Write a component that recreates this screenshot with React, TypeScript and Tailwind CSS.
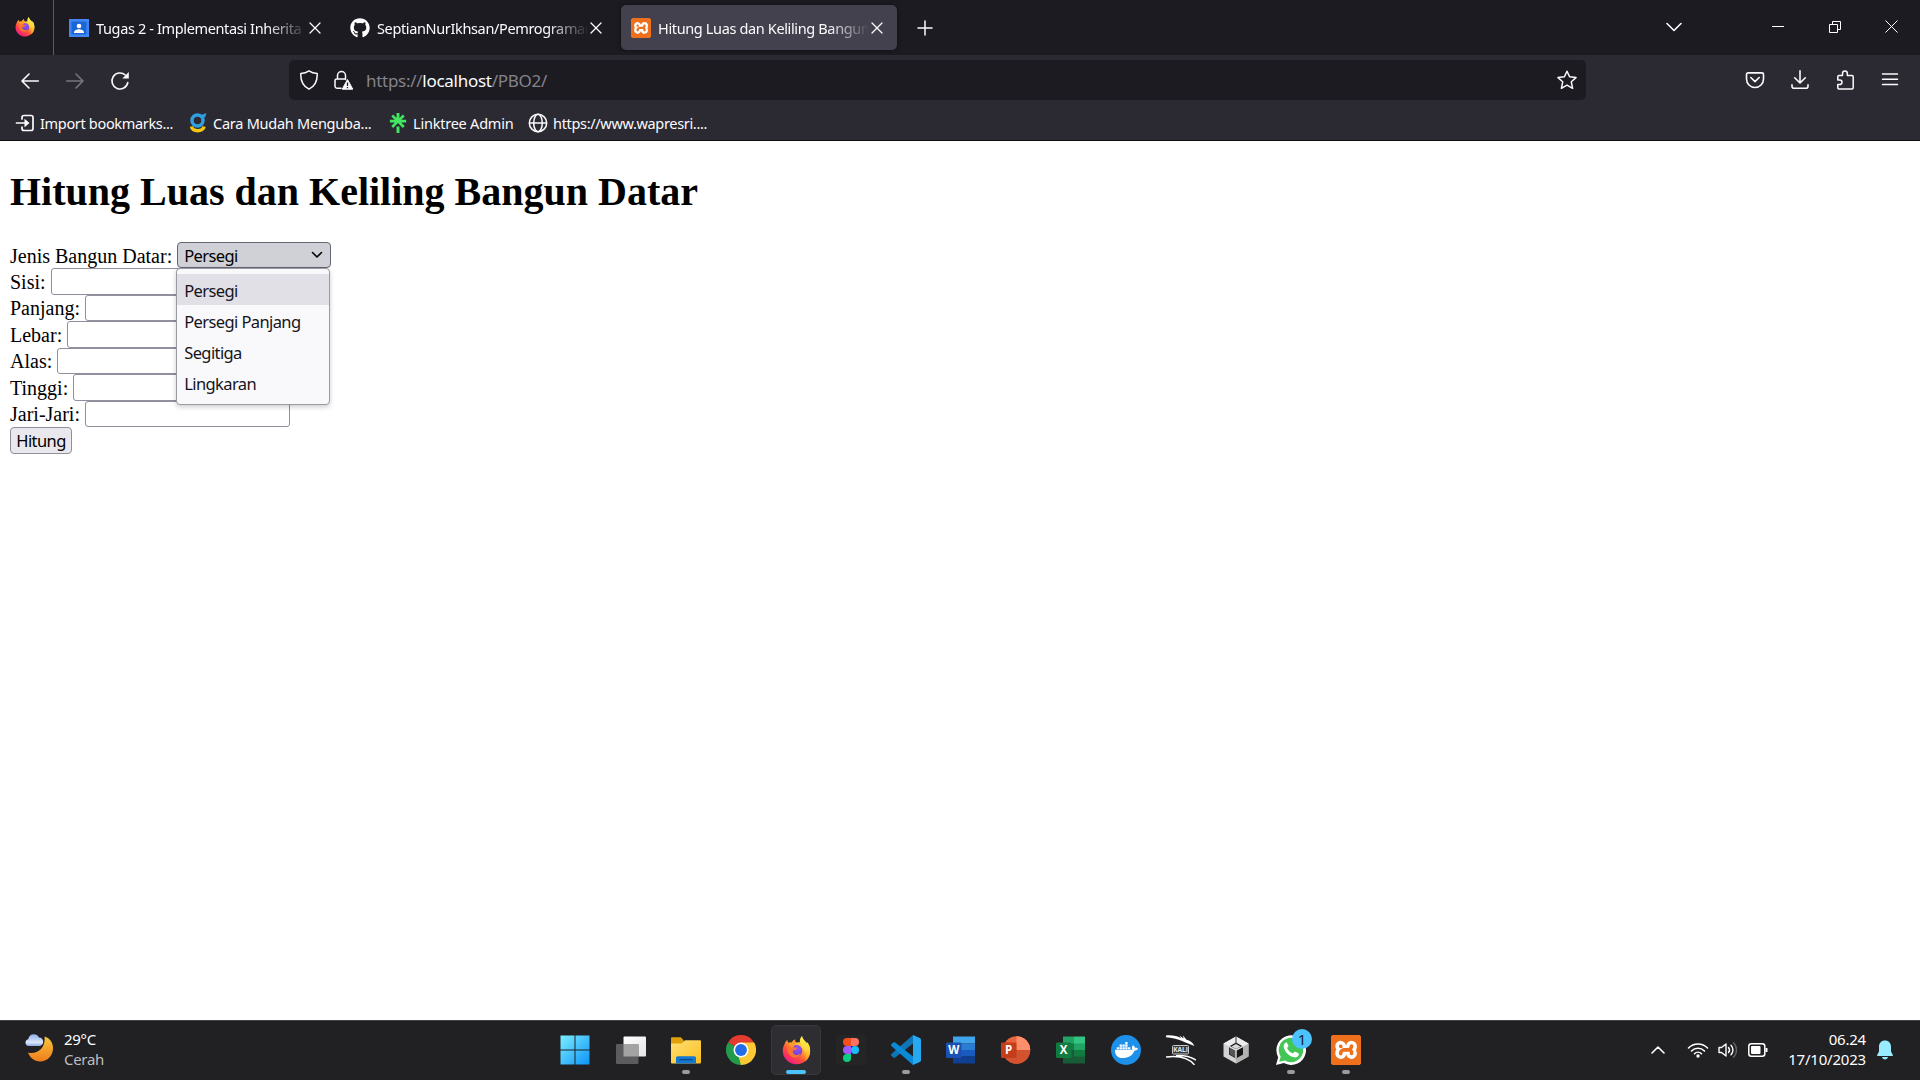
import type { ReactNode } from "react";
import { FaGithub, FaDocker } from "react-icons/fa";
import { SiXampp, SiLinktree } from "react-icons/si";

const LINE = { fill: "none", stroke: "currentColor", strokeLinecap: "round", strokeLinejoin: "round" } as const;

function Firefox({ className, id }: { className: string; id: string }) {
  return (
    <svg viewBox="0 0 30 30" className={className}>
      <defs>
        <linearGradient id={id + "b"} x1="0.8" y1="0.1" x2="0.2" y2="0.95">
          <stop offset="0" stopColor="#fff14a" />
          <stop offset="0.35" stopColor="#ffb02a" />
          <stop offset="0.65" stopColor="#ff4f3c" />
          <stop offset="1" stopColor="#f0168a" />
        </linearGradient>
        <linearGradient id={id + "y"} x1="0.6" y1="0" x2="0.5" y2="1">
          <stop offset="0" stopColor="#fff44f" />
          <stop offset="0.5" stopColor="#ffd83a" />
          <stop offset="1" stopColor="#ff8a1f" />
        </linearGradient>
        <radialGradient id={id + "p"} cx="0.6" cy="0.3" r="0.8">
          <stop offset="0" stopColor="#9a52ff" />
          <stop offset="1" stopColor="#5a3bc4" />
        </radialGradient>
      </defs>
      <path d="M2.6 8.5C3.2 6.6 4.2 5.2 5.6 4.2c0 1.300.5 2.300 1.400 3 1-.4 2.100-.5 3.200-.3C10.800 5.300 12 4.100 13.600 3.500c-.3 1.200 0 2.300.9 3.300l4-.3C18.200 4.300 18.900 2 20.700 0c.4 2.500 1.600 4 3.400 5.700.8.700 1.300 1.500 1.700 2.300l.4-1.500c1.800 2.600 2.900 5.600 2.900 8.900C29.100 23 22.800 29.200 15 29.200S.8 23 .8 15.200c0-2.500.6-4.800 1.800-6.700z" fill={`url(#${id}b)`} />
      <path d="M20.700 0c.4 2.500 1.600 4 3.400 5.700.8.700 1.300 1.500 1.700 2.300l.4-1.500c1.800 2.600 2.900 5.600 2.900 8.900 0 4.500-2 8.500-5.300 11 1.600-3.500 1.500-8.500-1-11.600C20.500 11.800 17.200 5 20.700 0z" fill={`url(#${id}y)`} />
      <circle cx="15" cy="15.300" r="6" fill={`url(#${id}p)`} />
      <path d="M5.500 12.500c2-2 4.500-2 6.500-.8 1.600-.2 2.600.2 3.700.9-1 1.700-2.700 2-4.200 2.500-.8 1.800.5 4.200 3 4.500 2 .2 3.500-.6 5-1.900-.6 3-3.300 4.800-6.300 4.600-4.500-.3-7.700-4.600-7.700-9.800z" fill="#ff7a2b" opacity="0.9" />
      <path d="M7 7.200c1-.4 2.100-.5 3.200-.3.600-1.600 1.800-2.800 3.400-3.400-.3 1.200 0 2.300.9 3.300-.8 2-2.500 3-2.500 4.900-3 .2-5-1.500-5-4.500z" fill="#ff9a2a" />
    </svg>
  );
}

function Xampp({ className }: { className: string }) {
  return (
    <div className={"overflow-hidden rounded-[2px] border border-[#ee6f1c] bg-white " + className}>
      <SiXampp className="h-full w-full scale-[1.06] bg-[linear-gradient(#ee6f1c,#ee6f1c_10%,white_10%,white_90%,#ee6f1c_90%)] text-[#ee6f1c]" />
    </div>
  );
}

function Close() {
  return (
    <svg viewBox="0 0 12 12" className="h-3 w-3 shrink-0 text-[#fbfbfe]">
      <path d="M1 1l10 10M11 1L1 11" {...LINE} strokeWidth="1.300" />
    </svg>
  );
}

function Tab({ icon, title, active }: { icon: ReactNode; title: string; active?: boolean }) {
  return (
    <div className={"flex h-[45px] w-[276px] shrink-0 items-center rounded-[5px] pl-[10px] " + (active ? "bg-[#42414d] shadow-[0_0_4px_rgba(0,0,0,0.5)]" : "")}>
      <div className="flex w-[20px] shrink-0 justify-center">{icon}</div>
      <div className="ml-[7px] w-[210px] overflow-hidden whitespace-nowrap text-[14.500px] leading-[20px] tracking-[-0.360px] text-[#fbfbfe] [mask-image:linear-gradient(to_right,black_170px,transparent_212px)]">
        {title}
      </div>
      <div className="ml-[3px]"><Close /></div>
    </div>
  );
}

function TitleBar() {
  return (
    <div className="flex h-[55px] items-center bg-[#1c1b22]">
      <div className="flex h-full w-[54px] items-center border-r border-[#5b5b62] pb-[2px] pl-[15px]">
        <Firefox id="fs" className="h-5 w-5" />
      </div>
      <div className="ml-[5px] flex gap-[5px]">
        <Tab
          title="Tugas 2 - Implementasi Inherita"
          icon={
            <svg viewBox="0 0 20 18" className="h-[18px] w-5">
              <path d="M0 0h20v18H0z" fill="#4285f4" /><path d="M2.500 2.500h15v13h-15z" fill="#1a66d6" />
              <circle cx="10" cy="7" r="2.300" fill="#fff" /><path d="M5 14c0-3 3-3.700 5-3.700s5 .7 5 3.700z" fill="#fff" />
            </svg>
          }
        />
        <Tab title="SeptianNurIkhsan/Pemrograman" icon={<FaGithub className="h-5 w-5 text-white" />} />
        <Tab active title="Hitung Luas dan Keliling Bangun" icon={<Xampp className="h-5 w-5" />} />
      </div>
      <svg viewBox="0 0 16 16" className="ml-[20px] h-4 w-4 text-[#fbfbfe]"><path d="M8 1v14M1 8h14" {...LINE} strokeWidth="1.500" /></svg>
      <div className="ml-auto flex items-center pb-[2px] text-[#fbfbfe]">
        <svg viewBox="0 0 16 10" className="mr-[90px] h-[10px] w-4"><path d="M1 1.500l7 7 7-7" {...LINE} strokeWidth="1.600" /></svg>
        <div className="mr-[45px] h-px w-3 bg-white" />
        <svg viewBox="0 0 12 12" className="mr-[44px] h-3 w-3"><path d="M.5 3.500h8v8h-8zM3.500 3.500v-3h8v8h-3" fill="none" stroke="#fff" /></svg>
        <svg viewBox="0 0 13 13" className="mr-[22px] h-[13px] w-[13px]"><path d="M.5.5l12 12M12.500.5l-12 12" fill="none" stroke="#fff" /></svg>
      </div>
    </div>
  );
}

function NavBar() {
  return (
    <div className="flex h-[50px] items-center bg-[#2b2a33] text-[#fbfbfe]">
      <svg viewBox="0 0 20 20" className="ml-5 mt-px h-5 w-5"><path d="M18.300 10H2M9 3l-7 7 7 7" {...LINE} strokeWidth="1.600" /></svg>
      <svg viewBox="0 0 20 20" className="ml-[25px] mt-px h-5 w-5 text-[#77767e]"><path d="M1.700 10H18M11 3l7 7-7 7" {...LINE} strokeWidth="1.600" /></svg>
      <svg viewBox="0 0 20 20" className="ml-[25px] mt-px h-5 w-5">
        <path d="M17.800 11.500A8 8 0 1 1 15.300 4" {...LINE} strokeWidth="1.600" /><path d="M18.800 1v6.500h-6.500z" fill="currentColor" />
      </svg>
      <div className="ml-[159px] flex h-10 w-[1297px] items-center rounded-[5px] bg-[#1c1b22]">
        <svg viewBox="0 0 20 20" className="ml-[10px] h-5 w-5"><path d="M10 .9c2.200 1.600 5 2.500 8.200 2.600.3 6.500-1.700 12.500-8.200 15.700C3.500 16 1.500 10 1.800 3.500 5 3.400 7.800 2.500 10 .9z" {...LINE} strokeWidth="1.500" /></svg>
        <svg viewBox="0 0 20 20" className="ml-[14px] h-5 w-5">
          <path d="M8 18.200H4A2 2 0 0 1 2 16.500v-5.800a1.800 1.800 0 0 1 2-1.800h8.500M4.500 8.500V5.500a4 4 0 0 1 8 0v4" {...LINE} strokeWidth="1.500" />
          <path d="M14.500 9.500l5.300 9.700H9.200z" fill="currentColor" stroke="currentColor" strokeLinejoin="round" />
          <path d="M14.500 12.500v3.500M14.500 17v1.300" stroke="#1c1b22" strokeWidth="1.300" />
        </svg>
        <div className="ml-[13px] mt-[2px] text-[17px] leading-6 tracking-[-0.280px] text-[#84838a]">
          https://<span className="text-[#fbfbfe]">localhost</span>/PBO2/
        </div>
        <svg viewBox="0 0 20 20" className="ml-auto mr-[9px] h-5 w-5"><path d="M10 1.200l2.600 5.600 6.400.8-4.700 4.200 1.300 6.500-5.600-3.200-5.600 3.200 1.300-6.500L1 7.600l6.400-.8z" {...LINE} strokeWidth="1.500" /></svg>
      </div>
      <div className="ml-auto mr-5 flex items-center gap-[25px]">
        <svg viewBox="0 0 20 20" className="h-5 w-5"><path d="M3 2.900h14a1.500 1.500 0 0 1 1.500 1.500V9A8.500 8.500 0 0 1 1.500 9V4.400A1.500 1.500 0 0 1 3 2.900zM5.800 7.500L10 11.600l4.200-4.100" {...LINE} strokeWidth="1.600" /></svg>
        <svg viewBox="0 0 20 20" className="h-5 w-5"><path d="M10 .8v12M4.700 7.800L10 13l5.300-5.200M2 14.700v1.500a2 2 0 0 0 2 2h12a2 2 0 0 0 2-2v-1.500" {...LINE} strokeWidth="1.600" /></svg>
        <svg viewBox="0 0 20 20" className="h-5 w-5"><path d="M7.500 5.500V3.400a2.400 2.400 0 0 1 4.800 0v2.100H17a1.200 1.200 0 0 1 1.200 1.200v11a1.200 1.200 0 0 1-1.200 1.200H4a1.200 1.200 0 0 1-1.200-1.200v-3.200h2a2.200 2.200 0 0 0 0-4.400h-2V6.700A1.200 1.200 0 0 1 4 5.500z" {...LINE} strokeWidth="1.500" /></svg>
        <svg viewBox="0 0 20 20" className="h-5 w-5"><path d="M2.500 4h15M2.500 9.300h15M2.500 14.600h15" {...LINE} strokeWidth="1.500" /></svg>
      </div>
    </div>
  );
}

function Bookmark({ icon, children, className }: { icon: ReactNode; children: ReactNode; className: string }) {
  return (
    <div className={"flex shrink-0 items-center whitespace-nowrap " + className}>
      <div className="mr-[5px] flex w-5 shrink-0 justify-center">{icon}</div>
      {children}
    </div>
  );
}

function BookmarksBar() {
  return (
    <div className="flex h-[36px] items-center border-b border-[#0c0c0d] bg-[#2b2a33] pl-[15px] pt-[1px] text-[14.500px] leading-5 text-[#fbfbfe]">
      <Bookmark className="w-[173px] tracking-[-0.330px]" icon={<svg viewBox="0 0 20 20" className="h-5 w-5"><path d="M7 6V4.500A2 2 0 0 1 9 2.500h7a2 2 0 0 1 2 2v11a2 2 0 0 1-2 2H9a2 2 0 0 1-2-2V14M1.500 10H12" {...LINE} strokeWidth="1.700" /><path d="M9.500 5.800l5 4.200-5 4.200z" fill="currentColor" /></svg>}>
        Import bookmarks...
      </Bookmark>
      <Bookmark className="w-[200px] tracking-[-0.250px]" icon={<svg viewBox="0 0 20 20" className="h-5 w-5"><path d="M3.500 13.500c1 5.500 12 5.500 12.500 0" fill="none" stroke="#f5c518" strokeWidth="3.500" /><circle cx="9.500" cy="7.500" r="5.500" fill="none" stroke="#2f9fe0" strokeWidth="3.500" /><path d="M12 2.500L18.500 0 17 4.500z" fill="#2f9fe0" /></svg>}>
        Cara Mudah Menguba...
      </Bookmark>
      <Bookmark className="w-[140px] tracking-[-0.220px]" icon={<SiLinktree className="h-5 w-5 text-[#43e660]" />}>
        Linktree Admin
      </Bookmark>
      <Bookmark className="tracking-[-0.330px]" icon={<svg viewBox="0 0 20 20" className="h-5 w-5"><g fill="none" stroke="currentColor" strokeWidth="1.500"><circle cx="10" cy="10" r="8.700" /><ellipse cx="10" cy="10" rx="4.300" ry="8.700" /><path d="M1.500 10h17" /></g></svg>}>
        https://www.wapresri....
      </Bookmark>
    </div>
  );
}

const FIELDS = ["Sisi:", "Panjang:", "Lebar:", "Alas:", "Tinggi:", "Jari-Jari:"];
const OPTIONS = ["Persegi", "Persegi Panjang", "Segitiga", "Lingkaran"];

function Page() {
  return (
    <main className="flex-1 bg-white pl-[10px] pt-[28px] font-['Liberation_Serif',serif] text-[20px] text-black">
      <h1 className="h-[46px] text-[40px] font-bold leading-[46px]">Hitung Luas dan Keliling Bangun Datar</h1>
      <div className="mt-[27px] flex h-[26px] items-center">
        <span className="pt-px leading-[26px]">Jenis Bangun Datar:</span>
        <div className="relative ml-[5px] h-[26px] w-[154px] font-['Noto_Sans',sans-serif] text-[16.500px] tracking-[-0.600px]">
          <div className="flex h-full items-center justify-between rounded-[4px] border border-[#676774] bg-[#d0d0d7] pl-[6px] pr-[7px] leading-6">
            <span className="pt-px">Persegi</span>
            <svg viewBox="0 0 12 8" className="h-2 w-3"><path d="M1.500 1.500L6 6l4.500-4.500" {...LINE} strokeWidth="1.600" /></svg>
          </div>
          <ul className="absolute -left-px top-[26px] z-10 h-[137px] w-[154px] rounded-[4px] border border-[#9a9aa3] bg-[#f9f9fb] pt-[5px] text-[#15141a] shadow-[0_2px_5px_rgba(0,0,0,0.2)]">
            {OPTIONS.map((o, i) => (
              <li key={o} className={"h-[31px] whitespace-nowrap pl-[7px] pt-px leading-[31px] " + (i === 0 ? "bg-[#e0e0e6]" : "")}>{o}</li>
            ))}
          </ul>
        </div>
      </div>
      {FIELDS.map((label) => (
        <div key={label} className="flex h-[26.500px] items-center">
          <span className="pt-px leading-[26px]">{label}</span>
          <span className="ml-[5px] h-[26.500px] w-[205px] rounded-[3px] border border-[#8f8f9d] bg-white" />
        </div>
      ))}
      <button className="flex h-[27px] w-[62px] items-center justify-center rounded-[4px] border border-[#8f8f9d] bg-[#e9e9ed] font-['Noto_Sans',sans-serif] text-[16.500px] leading-6 tracking-[-0.600px]">
        Hitung
      </button>
    </main>
  );
}

function Office({ letter, children, chip }: { letter: string; children: ReactNode; chip: string }) {
  return (
    <svg viewBox="0 0 30 30" className="h-[30px] w-[30px]">
      {children}
      <rect x="0" y="7.500" width="15.500" height="15.500" rx="1.300" fill={chip} />
      <text x="7.700" y="19.300" textAnchor="middle" fontSize="11.500" fontWeight="700" fontFamily="Open Sans, sans-serif" fill="#fff">{letter}</text>
    </svg>
  );
}

function App30({ children, state }: { children: ReactNode; state?: "open" | "active" }) {
  return (
    <div className={"relative flex h-[50px] w-[50px] items-center justify-center rounded-[5px] " + (state === "active" ? "border border-[#38373c] bg-[#2e2d32]" : "")}>
      {children}
      {state === "open" && <span className="absolute bottom-[1px] left-[21px] h-[4px] w-[8px] rounded-full bg-[#9a9a9c]" />}
      {state === "active" && <span className="absolute bottom-0 left-[14px] h-[4px] w-5 rounded-full bg-[#4cc2ff]" />}
    </div>
  );
}

function Taskbar() {
  return (
    <footer className="flex h-[60px] items-center border-t border-[#404244] bg-[#212023] pb-[1px] text-[15px] text-white">
      <div className="flex w-[551px] items-center pl-[25px]">
        <svg viewBox="0 0 28 28" className="-mt-1 h-7 w-7">
          <defs>
            <linearGradient id="moon" x1="0" y1="0" x2="0" y2="1"><stop offset="0" stopColor="#f6c83c" /><stop offset="1" stopColor="#f07c1c" /></linearGradient>
            <linearGradient id="cloud" x1="0" y1="0" x2="0" y2="1"><stop offset="0" stopColor="#8fb0ea" /><stop offset=".7" stopColor="#dbe6fa" /><stop offset="1" stopColor="#8fa8e0" /></linearGradient>
          </defs>
          <path d="M19.500 2.500C25 4 28.300 9 28 15c-.3 7-6 12.500-13 12.500-5.500 0-10-3.500-12-9C12 21 21 14 19.500 2.500z" fill="url(#moon)" />
          <path d="M3.500 12A3.400 3.400 0 0 1 3.200 5.300C3.600 2 6 .2 8.800.2c2.400 0 4.300 1.200 5.200 3.300 2.500 0 4.200 1.800 4.200 4.200A4.200 4.200 0 0 1 14 12z" fill="url(#cloud)" />
        </svg>
        <div className="-mt-[3px] ml-[11px] leading-5 tracking-[-0.300px]">
          <div>29°C</div>
          <div className="text-[#bdbdbf]">Cerah</div>
        </div>
      </div>
      <div className="flex gap-[5px]">
        <App30>
          <svg viewBox="0 0 30 30" className="mr-[3px] h-[30px] w-[30px]">
            <defs><linearGradient id="win" x1="0" y1="0" x2="30" y2="30" gradientUnits="userSpaceOnUse"><stop offset="0" stopColor="#7df0ff" /><stop offset="1" stopColor="#0a91f8" /></linearGradient></defs>
            <path d="M.5.5h14v14H.5zM15.500.5h14v14h-14zM.5 15.500h14v14H.5zM15.500 15.500h14v14h-14z" fill="url(#win)" />
          </svg>
        </App30>
        <App30>
          <svg viewBox="0 0 30 30" className="h-[30px] w-[30px]">
            <defs><linearGradient id="tv" x1="0" y1="0" x2="1" y2="1"><stop offset="0" stopColor="#fff" /><stop offset="1" stopColor="#e4e4e4" /></linearGradient></defs>
            <rect x="7.500" y="1.500" width="22.500" height="20" rx="1" fill="url(#tv)" />
            <rect x="0" y="9" width="22.500" height="20" rx="1" fill="#5c5c5e" />
            <path d="M7.500 9h15v12.500h-15z" fill="#a3a3a4" />
          </svg>
        </App30>
        <App30 state="open">
          <svg viewBox="0 0 30 30" className="h-[30px] w-[30px]">
            <defs><linearGradient id="fold" x1="0" y1="0" x2="1" y2="1"><stop offset="0" stopColor="#ffdf77" /><stop offset="1" stopColor="#fcbf1c" /></linearGradient></defs>
            <path d="M0 3.500c0-.8.500-1.300 1.300-1.300h8.500l3 3.300v4H0z" fill="#e0a00c" />
            <path d="M0 8.500h10.500L14 5.300h14.700c.8 0 1.300.5 1.300 1.300v20.600c0 .8-.5 1.300-1.300 1.300H1.300C.5 28.500 0 28 0 27.200z" fill="url(#fold)" />
            <path d="M5 28.500V23c0-1 .8-1.800 1.800-1.800h16.400c1 0 1.800.8 1.800 1.800v5.500z" fill="#1478d0" />
            <path d="M9 24.600h12" stroke="#0b4a8a" strokeWidth="1.200" strokeLinecap="round" />
          </svg>
        </App30>
        <App30>
          <svg viewBox="0 0 48 48" className="h-[30px] w-[30px]">
            <path d="M24 24L3.200 12A24 24 0 0 1 44.800 12z" fill="#e33b2e" />
            <path d="M24 24L44.800 12A24 24 0 0 1 24 48z" fill="#fcc934" />
            <path d="M24 24v24A24 24 0 0 1 3.200 12z" fill="#229a4c" />
            <path d="M24 12h20.800L24 24z" fill="#e33b2e" /><path d="M24 12h20.800a24 24 0 0 1 2.400 6L34 20z" fill="#fcc934" />
            <path d="M13.600 30L3.200 12 24 24z" fill="#229a4c" /><path d="M34.400 30L24 48l-4-14z" fill="#fcc934" />
            <circle cx="24" cy="24" r="12" fill="#fff" /><circle cx="24" cy="24" r="9.500" fill="#246bea" />
          </svg>
        </App30>
        <App30 state="active"><Firefox id="fl" className="h-[29px] w-[29px]" /></App30>
        <App30>
          <div className="flex h-[30px] w-[30px] items-center justify-center rounded-[3px] bg-[#242524]">
            <svg viewBox="0 0 16 24" className="h-[24px] w-4">
              <path d="M4 0h4v8H4a4 4 0 0 1 0-8z" fill="#f24e1e" /><path d="M8 0h4a4 4 0 0 1 0 8H8z" fill="#ff7262" />
              <path d="M4 8h4v8H4a4 4 0 0 1 0-8z" fill="#a259ff" /><circle cx="12" cy="12" r="4" fill="#1abcfe" />
              <path d="M4 16h4v4a4 4 0 1 1-4-4z" fill="#0acf83" />
            </svg>
          </div>
        </App30>
        <App30 state="open">
          <svg viewBox="0 0 30 30" className="h-[30px] w-[30px]">
            <path d="M22 0v8.500L4.200 22.500c-.7.500-1.400.5-2 0L.6 21c-.8-.7-.8-1.500 0-2.200z" fill="#0f75b8" />
            <path d="M22 30v-8.500L4.200 7.500c-.7-.5-1.400-.5-2 0L.6 9c-.8.700-.8 1.500 0 2.200z" fill="#0a8ad6" />
            <path d="M22 0l6.800 3c.8.400 1.200 1 1.200 1.900v20.200c0 .9-.4 1.500-1.200 1.900L22 30z" fill="#27a9f2" />
          </svg>
        </App30>
        <App30>
          <Office letter="W" chip="#1a52b4"><path d="M7 1.500h22v7H7z" fill="#41a5ee" /><path d="M7 8.500h22v6.500H7z" fill="#2b7cd3" /><path d="M7 15h22v6.500H7z" fill="#185abd" /><path d="M7 21.500h22v7H7z" fill="#103f91" /></Office>
        </App30>
        <App30>
          <Office letter="P" chip="#c43e1c"><circle cx="15.500" cy="15" r="13.700" fill="#e8643c" /><path d="M15.500 1.300A13.700 13.700 0 0 1 29.200 15H15.500z" fill="#ff8f6b" /><path d="M1.800 15h27.400a13.700 13.700 0 0 1-27.400 0z" fill="#d35230" /></Office>
        </App30>
        <App30>
          <Office letter="X" chip="#107c41"><path d="M7 1.500h11v9H7z" fill="#21a366" /><path d="M18 1.500h11v9H18z" fill="#33c481" /><path d="M7 8.500h11V15H7z" fill="#107c41" /><path d="M18 8.500h11V15H18z" fill="#21a366" /><path d="M7 15h22v13.500H7z" fill="#185c37" /><path d="M18 15h11v6.500H18z" fill="#107c41" /></Office>
        </App30>
        <App30>
          <div className="flex h-[30px] w-[30px] items-center justify-center rounded-full bg-[#1d90ea] text-white"><FaDocker className="h-[22px] w-[23px]" /></div>
        </App30>
        <App30>
          <svg viewBox="0 0 30 30" className="h-[30px] w-[30px]">
            <path d="M0 .5c6-.5 11 .5 15 2.500l-1.500-2.500 4 3L17 .5l3.500 4.300c2.500.7 4.500 1.700 6 3.200l2 3C20 8 12 3 0 2.200z" fill="#fff" />
            <path d="M0 22c12-1.500 23 1 28.500 8M10 20.700c8-.5 14 .8 20 4.300" fill="none" stroke="#fff" strokeWidth="1.500" />
            <rect x="6.500" y="10.500" width="16" height="8.500" rx="1" fill="#3a3a3c" stroke="#c9c9c9" />
            <text x="14.500" y="17.200" textAnchor="middle" fontSize="6.500" fontWeight="700" fontFamily="Open Sans, sans-serif" fill="#e6e6e6">KALI</text>
          </svg>
        </App30>
        <App30>
          <svg viewBox="0 0 26 28" className="h-[28px] w-[26px]">
            <path d="M13 .5l12.500 7v13L13 27.500.5 20.500v-13z" fill="#d2d2d2" />
            <path d="M13 14v13.500l12.500-7v-13z" fill="#b2b2b2" /><path d="M13 .5l12.500 7L13 14 .5 7.500z" fill="#ededed" />
            <path d="M13 6.500l7 4v8l-7 4-7-4v-8z" fill="#161616" />
            <path d="M6.500 11l6 3.300v7.200l-6-3.500z" fill="#555" />
            <path d="M13 14v8M13 14l7-3.700M13 14L6 10.300" stroke="#dedede" strokeWidth="1.500" /><path d="M13 0v8" stroke="#363636" strokeWidth="1" />
            <path d="M13 8l4.500 2.500L13 13l-4.500-2.500z" fill="#dadada" />
          </svg>
        </App30>
        <App30 state="open">
          <svg viewBox="0 0 30 30" className="h-[30px] w-[30px]">
            <path d="M0 30l2.200-7.800A14.800 14.800 0 1 1 7.900 28z" fill="#fff" />
            <path d="M3.200 26.800l1.500-5.200a12.200 12.200 0 1 1 4.200 4z" fill="#42c655" />
            <path d="M10 7.500c-1.500.7-2.700 2.300-2.300 4.500.8 4.500 5.300 9.300 10.300 10.300 2.300.4 4.200-.8 4.700-2.300.3-.9.200-1.400-.2-1.700l-3-1.500c-.5-.2-.9-.1-1.200.3l-1.300 1.500c-2.800-1-4.700-2.800-6-5.500l1.300-1.500c.2-.4.200-.7 0-1.100l-1.200-2.600c-.2-.4-.6-.5-1.100-.4z" fill="#fff" />
          </svg>
          <span className="absolute left-[26px] top-[4px] flex h-5 w-5 items-center justify-center rounded-full bg-[#4cc2ff] text-[15px] leading-5 text-[#14242e]">1</span>
        </App30>
        <App30 state="open"><Xampp className="h-[30px] w-[30px]" /></App30>
      </div>
      <div className="ml-auto flex items-center">
        <svg viewBox="0 0 14 8" className="mr-[22px] h-2 w-[14px]"><path d="M1 7l6-6 6 6" {...LINE} strokeWidth="1.600" /></svg>
        <svg viewBox="0 0 22 16" className="mr-[9px] h-4 w-[22px]"><g {...LINE} strokeWidth="1.600"><path d="M1.500 6a13.300 13.300 0 0 1 19 0M4.500 9a9.200 9.200 0 0 1 13 0M7.500 11.700a5 5 0 0 1 7 0" /></g><circle cx="11" cy="14" r="1.700" fill="#fff" /></svg>
        <svg viewBox="0 0 20 18" className="mr-[10px] h-[18px] w-5"><g {...LINE} strokeWidth="1.400"><path d="M1 6.500h2.500L8 3v12l-4.500-3.500H1zM10.500 6.500c1.300 1.500 1.300 3.500 0 5M13 4.200c2.600 2.700 2.600 6.900 0 9.600" /><path d="M15.500 1.800c4 4 4 10.400 0 14.400" stroke="#626264" /></g></svg>
        <svg viewBox="0 0 20 14" className="h-[14px] w-5"><rect x=".8" y=".8" width="16" height="12.400" rx="2.500" {...LINE} strokeWidth="1.500" /><rect x="3" y="3" width="9.500" height="8" rx="1" fill="#fff" /><path d="M18.500 5v4" stroke="#fff" strokeWidth="2" /></svg>
        <div className="-mt-[3px] w-[98px] text-right leading-5 tracking-[-0.200px]">
          <div>06.24</div>
          <div>17/10/2023</div>
        </div>
        <svg viewBox="0 0 16 20" className="ml-[11px] mr-[27px] h-5 w-4"><path d="M8 .5c3.700 0 6 2.700 6 6v5l2 3.700c0 .6-.3.800-.8.800H.8c-.5 0-.8-.2-.8-.8l2-3.700v-5c0-3.300 2.300-6 6-6zM5 17h6c-.3 1.500-1.500 2.500-3 2.500S5.300 18.500 5 17z" fill="#99ebff" /></svg>
      </div>
    </footer>
  );
}

export default function App() {
  return (
    <div className="flex h-[1080px] w-[1920px] flex-col overflow-hidden bg-white font-['Noto_Sans',sans-serif]">
      <TitleBar />
      <NavBar />
      <BookmarksBar />
      <Page />
      <Taskbar />
    </div>
  );
}
